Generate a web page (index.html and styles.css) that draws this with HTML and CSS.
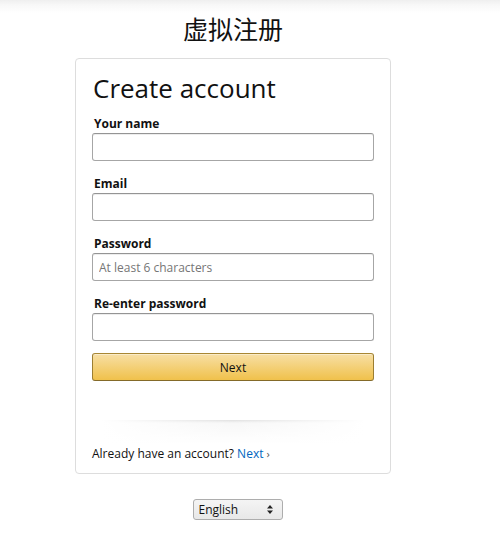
FILE: index.html
```html
<!DOCTYPE html>
<html lang="en">
<head>
<meta charset="utf-8">
<title>虚拟注册</title>
<link rel="stylesheet" href="styles.css">
</head>
<body>
<div class="page">
  <header class="brand">
    <h1 class="brand-title">虚拟注册</h1>
  </header>
  <main class="card">
    <h2 class="card-title">Create account</h2>
    <form class="form">
      <div class="field">
        <label class="label" for="name">Your name</label>
        <input class="input" id="name" type="text">
      </div>
      <div class="field">
        <label class="label" for="email">Email</label>
        <input class="input" id="email" type="email">
      </div>
      <div class="field">
        <label class="label" for="pw">Password</label>
        <input class="input" id="pw" type="password" placeholder="At least 6 characters">
      </div>
      <div class="field field-last">
        <label class="label" for="pw2">Re-enter password</label>
        <input class="input" id="pw2" type="password">
      </div>
      <button class="btn" type="button">Next</button>
    </form>
    <div class="divider"></div>
    <p class="signin">Already have an account? <a class="link" href="#">Next <span class="caret">›</span></a></p>
  </main>
  <footer class="footer">
    <div class="lang">
      <span class="lang-text">English</span>
      <svg class="lang-arrows" width="6" height="9" viewBox="0 0 6 9"><path d="M3 0L6 3.5H0Z M3 9L0 5.5H6Z" fill="#222"/></svg>
    </div>
  </footer>
</div>
</body>
</html>
```

FILE: styles.css
```css
html, body {
  margin: 0;
  padding: 0;
  background: #fff;
}
body {
  font-family: "Open Sans", "Noto Sans", Arial, sans-serif;
  color: #111;
}
.page {
  width: 500px;
  min-height: 542px;
  background: linear-gradient(to bottom, #efefef 0, #f8f8f8 5px, #fff 13px);
  display: flex;
  flex-direction: column;
  align-items: center;
}
.brand {
  width: 100%;
  display: flex;
  justify-content: center;
  padding-top: 11px;
  height: 58px;
  box-sizing: border-box;
}
.brand-title {
  margin: 0 0 0 -34px;
  font-family: "Noto Sans CJK SC", sans-serif;
  font-weight: 400;
  font-size: 25px;
  line-height: 34px;
  color: #111;
}
.card {
  width: 316px;
  box-sizing: border-box;
  margin-left: -34px;
  border: 1px solid #ddd;
  border-radius: 4px;
  padding: 11px 16px 10px 16px;
}
.card-title {
  margin: 0 0 8px 1px;
  font-weight: 400;
  font-size: 26px;
  line-height: 36px;
  color: #111;
}
.form {
  display: flex;
  flex-direction: column;
}
.field {
  display: flex;
  flex-direction: column;
  margin-bottom: 13px;
}
.field-last {
  margin-bottom: 12px;
}
.label {
  font-weight: 700;
  font-size: 12px;
  line-height: 19px;
  padding-left: 2px;
  margin-bottom: 0;
  color: #111;
}
.input {
  height: 28px;
  box-sizing: border-box;
  border: 1px solid #a6a6a6;
  border-top-color: #949494;
  border-radius: 3px;
  box-shadow: 0 1px 0 rgba(255,255,255,.5), 0 1px 0 rgba(0,0,0,.07) inset;
  padding: 0 6px;
  font-family: inherit;
  font-size: 12px;
  color: #111;
  background: #fff;
  outline: none;
}
.input::placeholder {
  color: #767676;
}
.btn {
  height: 28px;
  box-sizing: border-box;
  border: 1px solid;
  border-color: #a88734 #9c7e31 #846a29;
  border-radius: 3px;
  background: linear-gradient(to bottom, #f7dfa5, #f0c14b);
  box-shadow: 0 1px 0 rgba(255,255,255,.4) inset;
  font-family: inherit;
  font-size: 12px;
  color: #111;
  padding: 0;
}
.divider {
  position: relative;
  height: 24px;
  margin: 39px 10px 0;
  background: linear-gradient(to bottom, rgba(0,0,0,.12), rgba(0,0,0,.03) 3px, transparent);
}
.divider::after {
  content: "";
  position: absolute;
  inset: 0;
  background: linear-gradient(to right, #fff, rgba(255,255,255,0), #fff);
}
.signin {
  margin: 1px 0 0;
  font-size: 12px;
  line-height: 18px;
  color: #111;
}
.link {
  color: #0066c0;
  text-decoration: none;
}
.caret {
  font-size: 11px;
  color: #555;
}
.footer {
  margin-top: 25px;
  margin-left: -25px;
  display: flex;
  justify-content: center;
}
.lang {
  width: 90px;
  height: 21px;
  box-sizing: border-box;
  border: 1px solid #adadad;
  border-radius: 3px;
  background: linear-gradient(to bottom, #f4f4f4, #e8e8e8);
  display: flex;
  align-items: center;
  justify-content: space-between;
  padding: 0 9px 0 5px;
  font-size: 12px;
  color: #111;
}
```
